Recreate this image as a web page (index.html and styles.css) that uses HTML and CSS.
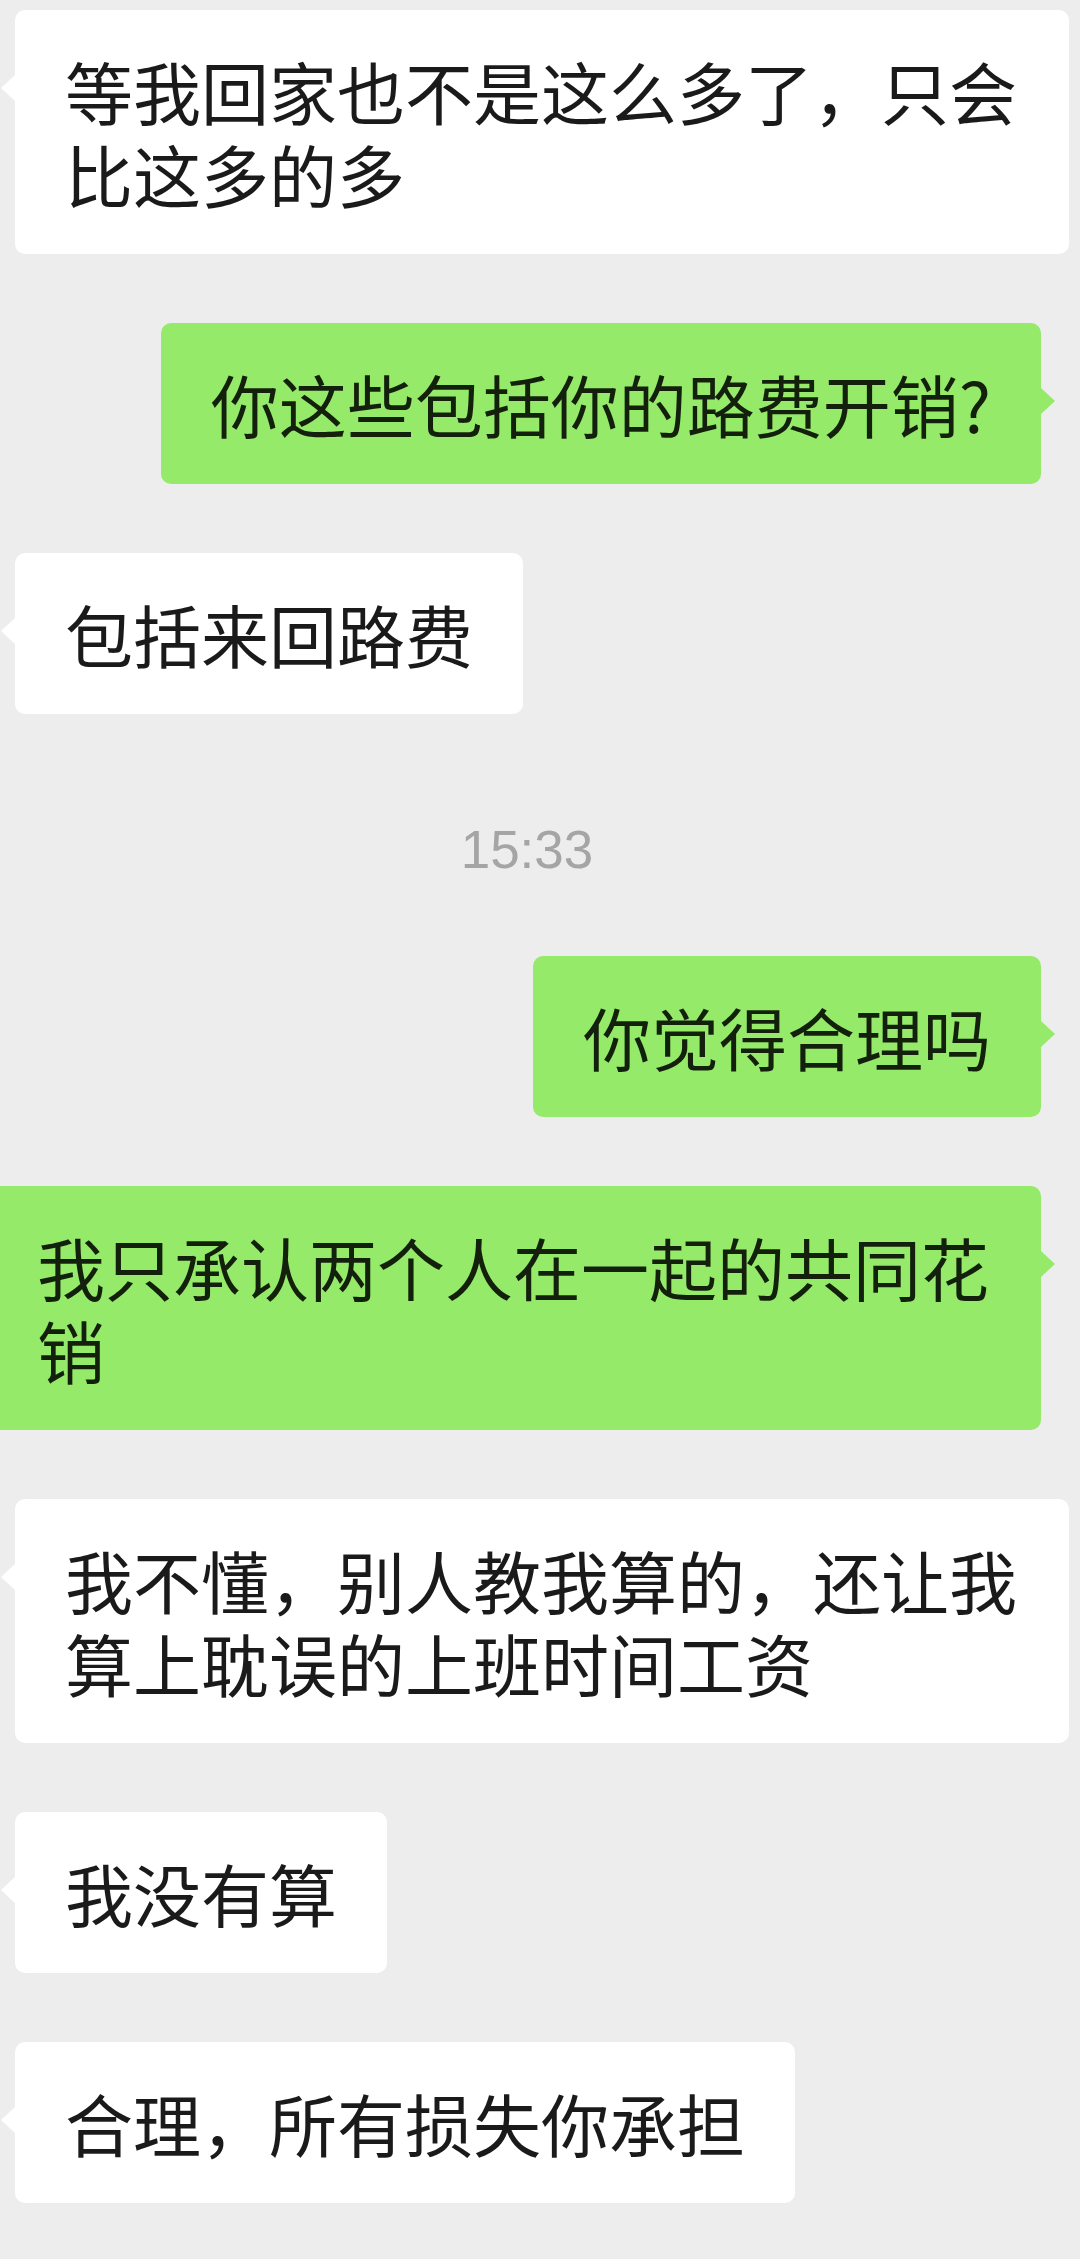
FILE: index.html
```html
<!DOCTYPE html>
<html>
<head>
    <meta charset="utf-8">
    <link rel="stylesheet" href="styles.css">
</head>
<body>
    <div class="chat">
        <div class="row them">
            <div class="bubble">等我回家也不是这么多了，只会比这多的多</div>
        </div>
        <div class="row me">
            <div class="bubble">你这些包括你的路费开销?</div>
        </div>
        <div class="row them">
            <div class="bubble">包括来回路费</div>
        </div>

        <div class="time">15:33</div>

        <div class="row me">
            <div class="bubble">你觉得合理吗</div>
        </div>
        <div class="row me">
            <div class="bubble">我只承认两个人在一起的共同花销</div>
        </div>
        <div class="row them">
            <div class="bubble">我不懂，别人教我算的，还让我算上耽误的上班时间工资</div>
        </div>
        <div class="row them">
            <div class="bubble">我没有算</div>
        </div>
        <div class="row them">
            <div class="bubble">合理，所有损失你承担</div>
        </div>
    </div>
</body>
</html>
```

FILE: styles.css
```css
html, body {
    margin: 0;
    height: 2259px;
    overflow: hidden;
    background: #ededed;
}
.chat {
    display: flex;
    flex-direction: column;
    gap: 69px;
    padding-top: 10px;
    font-family: "Noto Sans CJK SC", "Noto Sans", sans-serif;
}
.row {
    display: flex;
}
.row.them {
    justify-content: flex-start;
    padding-left: 15px;
}
.row.me {
    justify-content: flex-end;
    padding-right: 39px;
}
.bubble {
    position: relative;
    box-sizing: border-box;
    flex-shrink: 0;
    max-width: 1054px;
    padding: 39px 50px;
    font-size: 68px;
    line-height: 83px;
    color: #1a1a1a;
    border-radius: 10px;
}
.them .bubble {
    background: #ffffff;
}
.me .bubble {
    background: #95ea6a;
    color: #13200c;
}
/* little tails */
.bubble::before {
    content: "";
    position: absolute;
    top: 65px;
    border-top: 13px solid transparent;
    border-bottom: 13px solid transparent;
}
.them .bubble::before {
    left: -14px;
    border-right: 14px solid #ffffff;
}
.me .bubble::before {
    right: -14px;
    border-left: 14px solid #95ea6a;
}
.time {
    text-align: center;
    font-family: "Liberation Sans", Arial, sans-serif;
    font-size: 53px;
    line-height: 60px;
    color: #a5a5a5;
    padding: 37px 26px 7px 0;
}
```
